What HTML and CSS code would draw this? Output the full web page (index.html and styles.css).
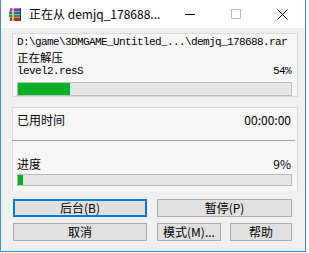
FILE: index.html
```html
<!DOCTYPE html>
<html lang="zh">
<head>
  <meta charset="UTF-8"/>
  <title>正在从 demjq_178688.rar</title>
  <link rel="stylesheet" href="styles.css">
</head>
<body>
  <div class="win">
    <div class="titlebar">
      <svg class="appicon" width="15" height="15" viewBox="0 0 15 15">
        <rect x="2" y="1" width="11" height="3" fill="#8a2f9c"/>
        <rect x="2" y="1" width="11" height="1" fill="#c070d0"/>
        <rect x="1" y="4" width="12" height="3" fill="#2f5fc8"/>
        <rect x="1" y="4" width="12" height="1" fill="#7fa6f0"/>
        <rect x="1" y="7" width="12" height="3" fill="#1f9a3a"/>
        <rect x="1" y="7" width="12" height="1" fill="#70d080"/>
        <rect x="2" y="10" width="11" height="4" fill="#c0282c"/>
        <rect x="2" y="10" width="11" height="1" fill="#f07070"/>
        <rect x="4" y="1" width="2" height="13" fill="#d8c48a"/>
        <rect x="12" y="1" width="1" height="13" fill="#333"/>
      </svg>
      <span class="title">正在从 demjq_178688...</span>
      <div class="caps">
        <span class="cap"><svg width="10" height="10" viewBox="0 0 10 10"><path d="M0 5.5h10" stroke="#000"/></svg></span>
        <span class="cap"><svg width="10" height="10" viewBox="0 0 10 10"><rect x="0.5" y="0.5" width="9" height="9" fill="none" stroke="#bbb"/></svg></span>
        <span class="cap"><svg width="11" height="11" viewBox="0 0 11 11"><path d="M0.5 0.5l10 10M10.5 0.5l-10 10" stroke="#000"/></svg></span>
      </div>
    </div>
    <div class="client">
      <div class="group first">
        <div class="mono">D:\game\3DMGAME_Untitled_...\demjq_178688.rar</div>
        <div class="cn">正在解压</div>
        <div class="row"><span class="mono">level2.resS</span><span class="mono">54%</span></div>
        <div class="bar"><div class="fill" style="width:19%"></div></div>
      </div>
      <div class="group second">
        <div class="row time"><span>已用时间</span><span>00:00:00</span></div>
        <div class="sep"></div>
        <div class="row prog"><span>进度</span><span>9%</span></div>
        <div class="bar"><div class="fill" style="width:2%"></div></div>
      </div>
      <div class="buttons">
        <button class="btn focus">后台(B)</button>
        <button class="btn">暂停(P)</button>
        <button class="btn">取消</button>
        <div class="pair">
          <button class="btn">模式(M)...</button>
          <button class="btn">帮助</button>
        </div>
      </div>
    </div>
  </div>
</body>
</html>
```
FILE: styles.css
```css
body{margin:0;background:#fff;font-family:"Noto Sans CJK SC","Noto Sans",sans-serif;font-size:12px;color:#000;}
.win{width:306px;height:252px;box-sizing:border-box;border:1px solid #3a96c8;border-top:none;display:flex;flex-direction:column;background:#f0f0f0;}
.titlebar{height:28px;background:#fff;display:flex;align-items:center;flex-shrink:0;}
.appicon{margin-left:7px;margin-right:6px;}
.title{font-size:12px;line-height:14px;flex:1;white-space:nowrap;}
.caps{display:flex;height:100%;}
.cap{width:46px;display:flex;align-items:center;justify-content:center;}
.client{padding:5px 7px 0 11px;display:flex;flex-direction:column;}
.group{background:#f7f7f7;border:1px solid #dadada;}
.first{height:64px;box-sizing:border-box;padding:2px 5px 0 4px;}
.mono{font-family:"Liberation Mono",monospace;font-size:11px;letter-spacing:-0.6px;line-height:13px;}
.cn{font-size:11.5px;line-height:16px;}
.row{display:flex;justify-content:space-between;}
.first .row{margin-right:1px;}
.bar{height:12px;background:#e6e6e6;border:1px solid #bcbcbc;margin-top:4px;}
.fill{height:100%;background:#06b025;}
.second{margin-top:10px;height:84px;box-sizing:border-box;padding:0 5px 0 4px;border-bottom:none;}
.time{margin-top:4px;line-height:16px;margin-right:1px;}
.sep{height:1px;background:#a0a0a0;margin:12px -3px 0 -5px;}
.prog{margin-top:15px;line-height:16px;margin-right:1px;}
.second .bar{margin-top:2px;height:10px;}
.buttons{display:grid;grid-template-columns:134px 135px;column-gap:10px;row-gap:6px;margin-top:8px;margin-left:1px;}
.btn{height:18px;padding:0;margin:0;font:12px "Noto Sans CJK SC","Noto Sans",sans-serif;line-height:14px;background:#e1e1e1;border:1px solid #adadad;color:#000;}
.focus{border:2px solid #0078d7;}
.pair{display:flex;gap:9px;}
.pair .btn{flex:1;}
.pair .btn:first-child{flex:0 0 64px;}
```
